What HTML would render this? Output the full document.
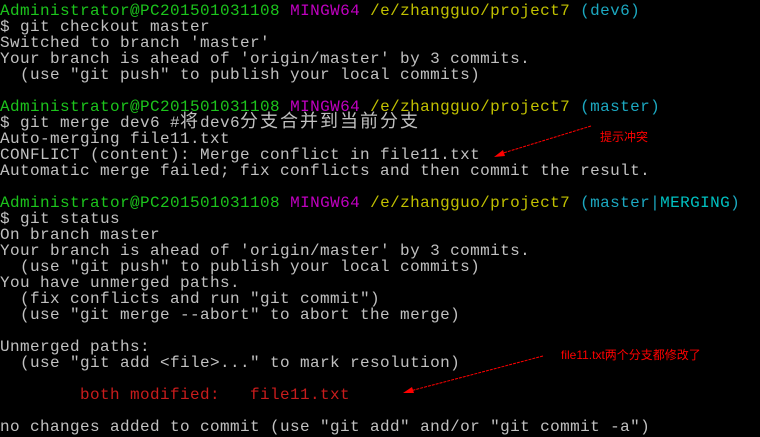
<!DOCTYPE html>
<html><head><meta charset="utf-8"><style>
html,body{margin:0;padding:0;background:#000;width:760px;height:437px;overflow:hidden}
pre{margin:0;padding:3px 0 0 0;font-family:"Liberation Mono","Noto Sans CJK SC",monospace;font-size:16px;letter-spacing:0.4px;line-height:16px;color:#c0c0c0;white-space:pre}
.g{color:#1cc41c}.m{color:#c000c0}.y{color:#c0c000}.c{color:#1ca8c0}.c2{color:#00c0c0}.r{color:#c81c1c}
.cj{letter-spacing:2px;font-size:18px;line-height:16px}
.a{position:absolute;color:#ff0000;font-family:"Liberation Sans","Noto Sans CJK SC",sans-serif;font-size:12px;line-height:14px}
svg{position:absolute;left:0;top:0}
</style></head><body>
<pre><span class="g">Administrator@PC201501031108</span> <span class="m">MINGW64</span> <span class="y">/e/zhangguo/project7</span> <span class="c">(dev6)</span>
$ git checkout master
Switched to branch 'master'
Your branch is ahead of 'origin/master' by 3 commits.
  (use "git push" to publish your local commits)

<span class="g">Administrator@PC201501031108</span> <span class="m">MINGW64</span> <span class="y">/e/zhangguo/project7</span> <span class="c">(master)</span>
$ git merge dev6 #<span class="cj">将</span>dev6<span class="cj">分支合并到当前分支</span>
Auto-merging file11.txt
CONFLICT (content): Merge conflict in file11.txt
Automatic merge failed; fix conflicts and then commit the result.

<span class="g">Administrator@PC201501031108</span> <span class="m">MINGW64</span> <span class="y">/e/zhangguo/project7</span> <span class="c">(master|<span class="c2">MERGING</span>)</span>
$ git status
On branch master
Your branch is ahead of 'origin/master' by 3 commits.
  (use "git push" to publish your local commits)
You have unmerged paths.
  (fix conflicts and run "git commit")
  (use "git merge --abort" to abort the merge)

Unmerged paths:
  (use "git add &lt;file&gt;..." to mark resolution)

        <span class="r">both modified:   file11.txt</span>

no changes added to commit (use "git add" and/or "git commit -a")</pre>
<div class="a" style="left:600px;top:130px">提示冲突</div>
<div class="a" style="left:561px;top:348px">file11.txt两个分支都修改了</div>
<svg width="760" height="437">
<line x1="591" y1="126" x2="500" y2="154" stroke="#ff0000" stroke-width="1" stroke-dasharray="3,1"/>
<polygon points="494,157 503,150 505,156" fill="#ff0000"/>
<line x1="543" y1="356" x2="410" y2="391" stroke="#ff0000" stroke-width="1" stroke-dasharray="3,1"/>
<polygon points="403,393 412,387 414,393" fill="#ff0000"/>
</svg>
</body></html>
